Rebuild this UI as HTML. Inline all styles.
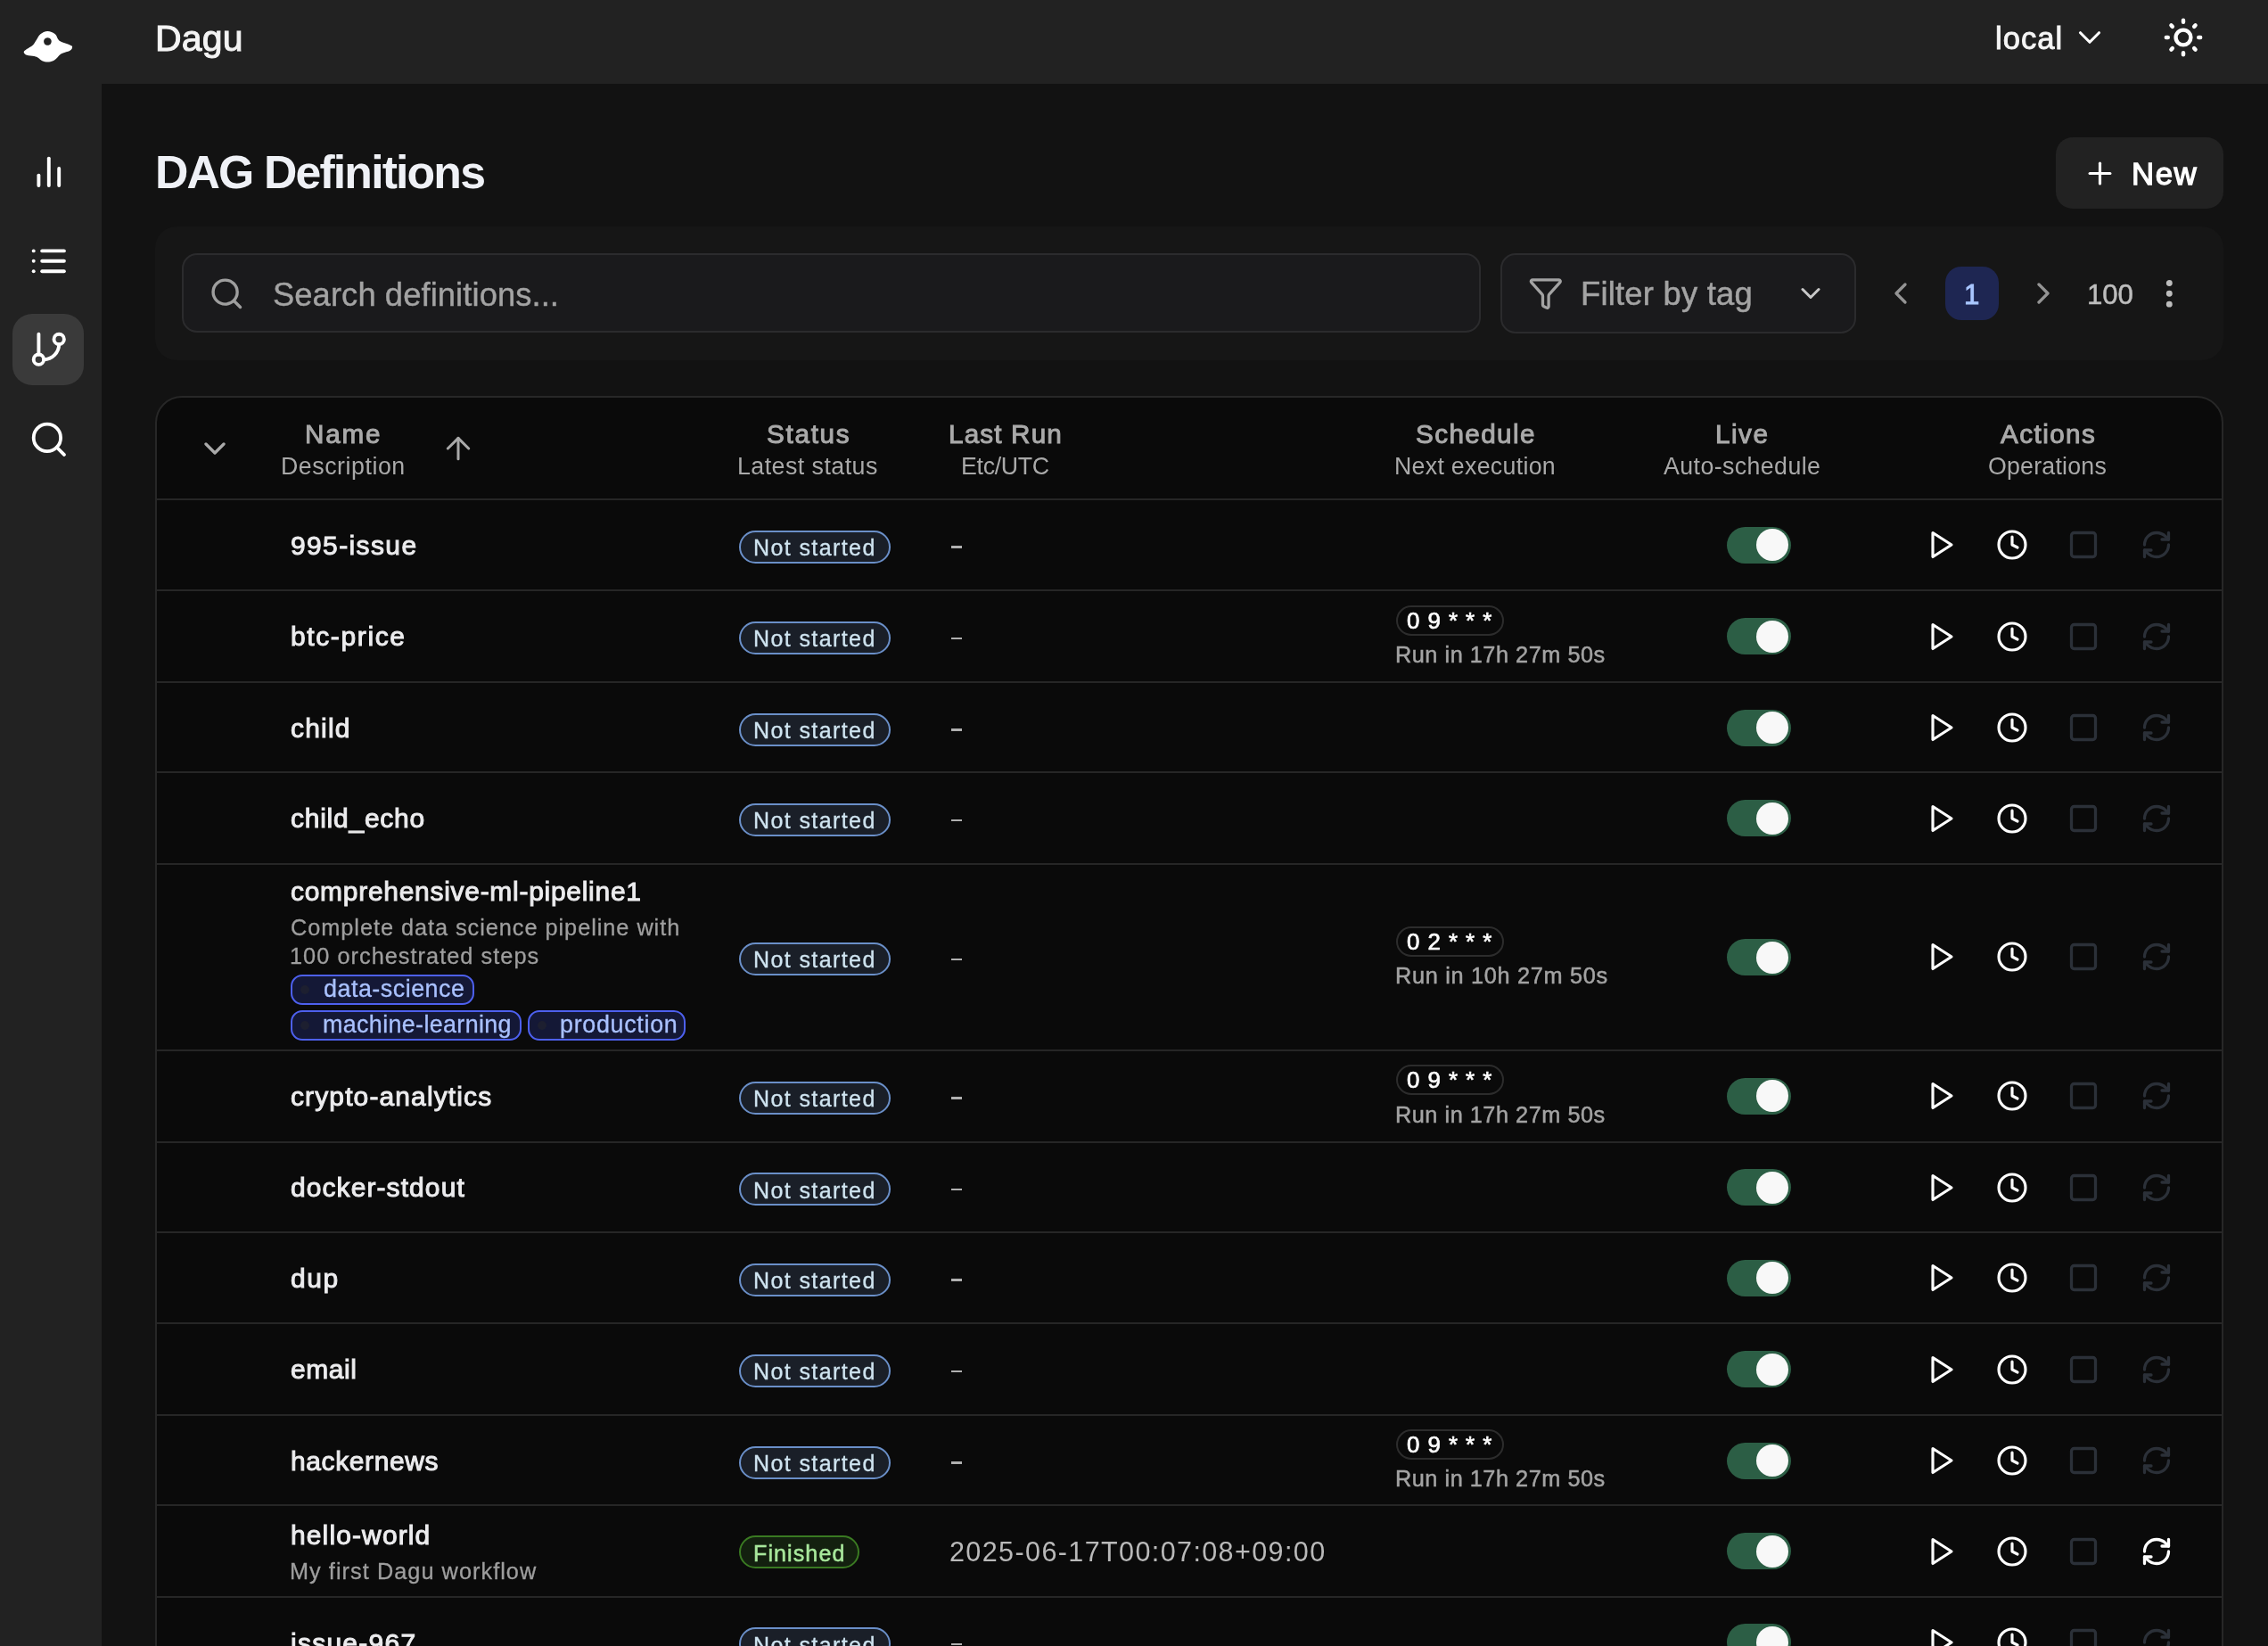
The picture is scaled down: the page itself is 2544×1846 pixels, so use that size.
<!DOCTYPE html>
<html><head><meta charset="utf-8"><style>
html,body{margin:0;padding:0;}
body{width:2544px;height:1846px;overflow:hidden;position:relative;background:#121212;font-family:"Liberation Sans",sans-serif;}
.b,.t,.i{position:absolute;}
.t{white-space:nowrap;will-change:transform;}
</style></head><body>
<div class="b" style="left:0;top:0;width:2544px;height:94px;background:#222222"></div>
<div class="b" style="left:0;top:0;width:114px;height:1846px;background:#222222"></div>
<svg class="i" style="left:20px;top:25px;width:70px;height:55px" viewBox="0 0 70 55"><path fill="#fff" fill-rule="evenodd" d="M33.4,10.0 C36.2,10.0 39.9,11.7 41.8,13.2 C43.7,14.7 44.0,17.4 45.0,18.8 C46.0,20.2 45.8,20.5 48.0,21.6 C50.2,22.7 56.3,24.4 58.5,25.4 C60.7,26.4 61.1,26.6 61.1,27.7 C61.1,28.8 60.6,30.4 58.5,31.7 C56.4,33.0 50.9,34.0 48.4,35.4 C45.9,36.8 45.1,38.9 43.6,40.2 C42.1,41.5 41.2,42.5 39.5,43.2 C37.8,43.9 35.4,44.5 33.4,44.5 C31.4,44.5 29.0,44.0 27.3,43.2 C25.6,42.5 24.5,40.9 23.0,40.0 C21.5,39.1 20.6,38.6 18.4,38.1 C16.2,37.6 11.9,37.6 10.0,36.8 C8.1,36.0 6.7,34.5 6.7,33.4 C6.7,32.3 8.3,31.4 10.0,30.1 C11.7,28.8 14.9,27.4 16.7,25.7 C18.5,24.0 19.3,22.1 20.7,20.0 C22.1,17.9 23.0,15.1 25.1,13.4 C27.2,11.7 30.6,10.0 33.4,10.0Z M33.4,17.2 a4.3,4.3 0 1,0 0.001,0Z"/></svg>
<div class="b" style="left:14px;top:352px;width:80px;height:80px;border-radius:22px;background:#3a3a3a"></div>
<svg class="i" style="left:31.60px;top:169.70px;width:45.60px;height:45.60px;" viewBox="0 0 24 24" fill="none" stroke="#fff" stroke-width="2.050" stroke-linecap="round" stroke-linejoin="round"><path d="M18 20V10"/><path d="M12 20V4"/><path d="M6 20v-6"/></svg>
<svg class="i" style="left:32.00px;top:269.80px;width:45.60px;height:45.60px;" viewBox="0 0 24 24" fill="none" stroke="#fff" stroke-width="2.050" stroke-linecap="round" stroke-linejoin="round"><path d="M3 12h.01"/><path d="M3 18h.01"/><path d="M3 6h.01"/><path d="M8 12h13"/><path d="M8 18h13"/><path d="M8 6h13"/></svg>
<svg class="i" style="left:31.80px;top:369.40px;width:45.60px;height:45.60px;" viewBox="0 0 24 24" fill="none" stroke="#fff" stroke-width="2.050" stroke-linecap="round" stroke-linejoin="round"><path d="M6 3v12"/><circle cx="18" cy="6" r="3"/><circle cx="6" cy="18" r="3"/><path d="M18 9a9 9 0 0 1-9 9"/></svg>
<svg class="i" style="left:31.60px;top:469.80px;width:45.60px;height:45.60px;" viewBox="0 0 24 24" fill="none" stroke="#fff" stroke-width="2.000" stroke-linecap="round" stroke-linejoin="round"><circle cx="11" cy="11" r="8"/><path d="m21 21-4.3-4.3"/></svg>
<svg class="i" style="left:2322.80px;top:20.80px;width:42.00px;height:42.00px;" viewBox="0 0 24 24" fill="none" stroke="#fff" stroke-width="1.800" stroke-linecap="round" stroke-linejoin="round"><path d="m6 9 6 6 6-6"/></svg>
<svg class="i" style="left:2425.00px;top:18.00px;width:48.00px;height:48.00px;" viewBox="0 0 24 24" fill="none" stroke="#fff" stroke-width="2.200" stroke-linecap="round" stroke-linejoin="round"><circle cx="12" cy="12" r="4.2"/><path d="M12.00 3.40L12.00 2.40"/><path d="M18.08 5.92L18.79 5.21"/><path d="M20.60 12.00L21.60 12.00"/><path d="M18.08 18.08L18.79 18.79"/><path d="M12.00 20.60L12.00 21.60"/><path d="M5.92 18.08L5.21 18.79"/><path d="M3.40 12.00L2.40 12.00"/><path d="M5.92 5.92L5.21 5.21"/></svg>
<div class="b" style="left:2306px;top:154px;width:188px;height:80px;border-radius:19px;background:#222222"></div>
<svg class="i" style="left:2336.00px;top:174.50px;width:39.00px;height:39.00px;" viewBox="0 0 24 24" fill="none" stroke="#fff" stroke-width="1.950" stroke-linecap="round" stroke-linejoin="round"><path d="M5 12h14"/><path d="M12 5v14"/></svg>
<div class="b" style="left:174px;top:254px;width:2320px;height:150px;border-radius:24px;background:#161616"></div>
<div class="b" style="left:204px;top:284px;width:1457px;height:89px;box-sizing:border-box;border:2px solid #2b2b2d;border-radius:17px;background:#1a1a1c"></div>
<svg class="i" style="left:233.90px;top:308.80px;width:40.60px;height:40.60px;" viewBox="0 0 24 24" fill="none" stroke="#9e9e9e" stroke-width="2.000" stroke-linecap="round" stroke-linejoin="round"><circle cx="11" cy="11" r="8"/><path d="m21 21-4.3-4.3"/></svg>
<div class="b" style="left:1683px;top:284px;width:399px;height:90px;box-sizing:border-box;border:2px solid #2b2b2d;border-radius:17px;background:#1a1a1c"></div>
<svg class="i" style="left:1714.00px;top:308.60px;width:39.60px;height:39.60px;" viewBox="0 0 24 24" fill="none" stroke="#a3a3a3" stroke-width="2.000" stroke-linecap="round" stroke-linejoin="round"><path d="M10 20a1 1 0 0 0 .553.895l2 1A1 1 0 0 0 14 21v-7a2 2 0 0 1 .517-1.341L21.74 4.67A1 1 0 0 0 21 3H3a1 1 0 0 0-.742 1.67l7.225 7.989A2 2 0 0 1 10 14z"/></svg>
<svg class="i" style="left:2012.50px;top:311.00px;width:36.00px;height:36.00px;" viewBox="0 0 24 24" fill="none" stroke="#c8c8c8" stroke-width="2.000" stroke-linecap="round" stroke-linejoin="round"><path d="m6 9 6 6 6-6"/></svg>
<svg class="i" style="left:2112.00px;top:308.50px;width:40.00px;height:40.00px;" viewBox="0 0 24 24" fill="none" stroke="#949494" stroke-width="2.000" stroke-linecap="round" stroke-linejoin="round"><path d="m15 18-6-6 6-6"/></svg>
<div class="b" style="left:2182px;top:299px;width:60px;height:60px;border-radius:18px;background:#1e2652"></div>
<svg class="i" style="left:2271.50px;top:308.50px;width:40.00px;height:40.00px;" viewBox="0 0 24 24" fill="none" stroke="#949494" stroke-width="2.000" stroke-linecap="round" stroke-linejoin="round"><path d="m9 18 6-6-6-6"/></svg>
<svg class="i" style="left:2413.40px;top:309.00px;width:40.60px;height:40.60px;" viewBox="0 0 24 24" fill="none" stroke="#bdbdbd" stroke-width="2.100" stroke-linecap="round" stroke-linejoin="round"><circle cx="12" cy="12" r="1"/><circle cx="12" cy="5" r="1"/><circle cx="12" cy="19" r="1"/></svg>
<div class="b" style="left:174px;top:444px;width:2320px;height:1442px;box-sizing:border-box;border:2px solid #272727;border-radius:30px;background:#0a0a0a"></div>
<svg class="i" style="left:220.80px;top:482.80px;width:40.00px;height:40.00px;" viewBox="0 0 24 24" fill="none" stroke="#a9a9a9" stroke-width="2.000" stroke-linecap="round" stroke-linejoin="round"><path d="m6 9 6 6 6-6"/></svg>
<svg class="i" style="left:494.00px;top:482.50px;width:40.00px;height:40.00px;" viewBox="0 0 24 24" fill="none" stroke="#a9a9a9" stroke-width="1.800" stroke-linecap="round" stroke-linejoin="round"><path d="m5 12 7-7 7 7"/><path d="M12 19V5"/></svg>
<div class="b" style="left:176px;top:559.0px;width:2316px;height:2px;background:#262626"></div>
<div class="b" style="left:829px;top:594.7px;width:170px;height:37px;box-sizing:border-box;border:2px solid #6a8fc8;border-radius:20px;background:#1a1f28"></div>
<div class="b" style="left:1067px;top:612.2px;width:12px;height:2.5px;background:#b0b0b0"></div>
<div class="b" style="left:1937px;top:590.7px;width:72px;height:41px;border-radius:21px;background:#2c5e45"></div>
<div class="b" style="left:1970px;top:593.2px;width:36px;height:36px;border-radius:18px;background:#f8f8f8"></div>
<svg class="i" style="left:2158.50px;top:593.20px;width:36.00px;height:36.00px;" viewBox="0 0 24 24" fill="none" stroke="#ffffff" stroke-width="2.100" stroke-linecap="round" stroke-linejoin="round"><polygon points="6 3 20 12 6 21 6 3"/></svg>
<svg class="i" style="left:2238.50px;top:593.20px;width:36.00px;height:36.00px;" viewBox="0 0 24 24" fill="none" stroke="#ffffff" stroke-width="2.100" stroke-linecap="round" stroke-linejoin="round"><circle cx="12" cy="12" r="10"/><polyline points="12 6 12 12 16 14"/></svg>
<svg class="i" style="left:2319.30px;top:593.20px;width:36.00px;height:36.00px;" viewBox="0 0 24 24" fill="none" stroke="#2b3038" stroke-width="2.200" stroke-linecap="round" stroke-linejoin="round"><rect width="18" height="18" x="3" y="3" rx="2"/></svg>
<svg class="i" style="left:2400.50px;top:593.20px;width:36.00px;height:36.00px;" viewBox="0 0 24 24" fill="none" stroke="#2b3038" stroke-width="2.200" stroke-linecap="round" stroke-linejoin="round"><path d="M3 12a9 9 0 0 1 9-9 9.75 9.75 0 0 1 6.74 2.74L21 8"/><path d="M21 3v5h-5"/><path d="M21 12a9 9 0 0 1-9 9 9.75 9.75 0 0 1-6.74-2.74L3 16"/><path d="M8 16H3v5"/></svg>
<div class="b" style="left:176px;top:661.4px;width:2316px;height:2px;background:#262626"></div>
<div class="b" style="left:829px;top:697.1px;width:170px;height:37px;box-sizing:border-box;border:2px solid #6a8fc8;border-radius:20px;background:#1a1f28"></div>
<div class="b" style="left:1067px;top:714.6px;width:12px;height:2.5px;background:#b0b0b0"></div>
<div class="b" style="left:1565.5px;top:678.6px;width:121px;height:34px;box-sizing:border-box;border:2px solid #2c2c2c;border-radius:18px"></div>
<div class="b" style="left:1937px;top:693.1px;width:72px;height:41px;border-radius:21px;background:#2c5e45"></div>
<div class="b" style="left:1970px;top:695.6px;width:36px;height:36px;border-radius:18px;background:#f8f8f8"></div>
<svg class="i" style="left:2158.50px;top:695.60px;width:36.00px;height:36.00px;" viewBox="0 0 24 24" fill="none" stroke="#ffffff" stroke-width="2.100" stroke-linecap="round" stroke-linejoin="round"><polygon points="6 3 20 12 6 21 6 3"/></svg>
<svg class="i" style="left:2238.50px;top:695.60px;width:36.00px;height:36.00px;" viewBox="0 0 24 24" fill="none" stroke="#ffffff" stroke-width="2.100" stroke-linecap="round" stroke-linejoin="round"><circle cx="12" cy="12" r="10"/><polyline points="12 6 12 12 16 14"/></svg>
<svg class="i" style="left:2319.30px;top:695.60px;width:36.00px;height:36.00px;" viewBox="0 0 24 24" fill="none" stroke="#2b3038" stroke-width="2.200" stroke-linecap="round" stroke-linejoin="round"><rect width="18" height="18" x="3" y="3" rx="2"/></svg>
<svg class="i" style="left:2400.50px;top:695.60px;width:36.00px;height:36.00px;" viewBox="0 0 24 24" fill="none" stroke="#2b3038" stroke-width="2.200" stroke-linecap="round" stroke-linejoin="round"><path d="M3 12a9 9 0 0 1 9-9 9.75 9.75 0 0 1 6.74 2.74L21 8"/><path d="M21 3v5h-5"/><path d="M21 12a9 9 0 0 1-9 9 9.75 9.75 0 0 1-6.74-2.74L3 16"/><path d="M8 16H3v5"/></svg>
<div class="b" style="left:176px;top:763.8px;width:2316px;height:2px;background:#262626"></div>
<div class="b" style="left:829px;top:799.5px;width:170px;height:37px;box-sizing:border-box;border:2px solid #6a8fc8;border-radius:20px;background:#1a1f28"></div>
<div class="b" style="left:1067px;top:817.0px;width:12px;height:2.5px;background:#b0b0b0"></div>
<div class="b" style="left:1937px;top:795.5px;width:72px;height:41px;border-radius:21px;background:#2c5e45"></div>
<div class="b" style="left:1970px;top:798.0px;width:36px;height:36px;border-radius:18px;background:#f8f8f8"></div>
<svg class="i" style="left:2158.50px;top:798.00px;width:36.00px;height:36.00px;" viewBox="0 0 24 24" fill="none" stroke="#ffffff" stroke-width="2.100" stroke-linecap="round" stroke-linejoin="round"><polygon points="6 3 20 12 6 21 6 3"/></svg>
<svg class="i" style="left:2238.50px;top:798.00px;width:36.00px;height:36.00px;" viewBox="0 0 24 24" fill="none" stroke="#ffffff" stroke-width="2.100" stroke-linecap="round" stroke-linejoin="round"><circle cx="12" cy="12" r="10"/><polyline points="12 6 12 12 16 14"/></svg>
<svg class="i" style="left:2319.30px;top:798.00px;width:36.00px;height:36.00px;" viewBox="0 0 24 24" fill="none" stroke="#2b3038" stroke-width="2.200" stroke-linecap="round" stroke-linejoin="round"><rect width="18" height="18" x="3" y="3" rx="2"/></svg>
<svg class="i" style="left:2400.50px;top:798.00px;width:36.00px;height:36.00px;" viewBox="0 0 24 24" fill="none" stroke="#2b3038" stroke-width="2.200" stroke-linecap="round" stroke-linejoin="round"><path d="M3 12a9 9 0 0 1 9-9 9.75 9.75 0 0 1 6.74 2.74L21 8"/><path d="M21 3v5h-5"/><path d="M21 12a9 9 0 0 1-9 9 9.75 9.75 0 0 1-6.74-2.74L3 16"/><path d="M8 16H3v5"/></svg>
<div class="b" style="left:176px;top:865.3px;width:2316px;height:2px;background:#262626"></div>
<div class="b" style="left:829px;top:901.0px;width:170px;height:37px;box-sizing:border-box;border:2px solid #6a8fc8;border-radius:20px;background:#1a1f28"></div>
<div class="b" style="left:1067px;top:918.5px;width:12px;height:2.5px;background:#b0b0b0"></div>
<div class="b" style="left:1937px;top:897.0px;width:72px;height:41px;border-radius:21px;background:#2c5e45"></div>
<div class="b" style="left:1970px;top:899.5px;width:36px;height:36px;border-radius:18px;background:#f8f8f8"></div>
<svg class="i" style="left:2158.50px;top:899.50px;width:36.00px;height:36.00px;" viewBox="0 0 24 24" fill="none" stroke="#ffffff" stroke-width="2.100" stroke-linecap="round" stroke-linejoin="round"><polygon points="6 3 20 12 6 21 6 3"/></svg>
<svg class="i" style="left:2238.50px;top:899.50px;width:36.00px;height:36.00px;" viewBox="0 0 24 24" fill="none" stroke="#ffffff" stroke-width="2.100" stroke-linecap="round" stroke-linejoin="round"><circle cx="12" cy="12" r="10"/><polyline points="12 6 12 12 16 14"/></svg>
<svg class="i" style="left:2319.30px;top:899.50px;width:36.00px;height:36.00px;" viewBox="0 0 24 24" fill="none" stroke="#2b3038" stroke-width="2.200" stroke-linecap="round" stroke-linejoin="round"><rect width="18" height="18" x="3" y="3" rx="2"/></svg>
<svg class="i" style="left:2400.50px;top:899.50px;width:36.00px;height:36.00px;" viewBox="0 0 24 24" fill="none" stroke="#2b3038" stroke-width="2.200" stroke-linecap="round" stroke-linejoin="round"><path d="M3 12a9 9 0 0 1 9-9 9.75 9.75 0 0 1 6.74 2.74L21 8"/><path d="M21 3v5h-5"/><path d="M21 12a9 9 0 0 1-9 9 9.75 9.75 0 0 1-6.74-2.74L3 16"/><path d="M8 16H3v5"/></svg>
<div class="b" style="left:176px;top:967.7px;width:2316px;height:2px;background:#262626"></div>
<div class="b" style="left:829px;top:1057.0px;width:170px;height:37px;box-sizing:border-box;border:2px solid #6a8fc8;border-radius:20px;background:#1a1f28"></div>
<div class="b" style="left:1067px;top:1074.5px;width:12px;height:2.5px;background:#b0b0b0"></div>
<div class="b" style="left:1565.5px;top:1038.5px;width:121px;height:34px;box-sizing:border-box;border:2px solid #2c2c2c;border-radius:18px"></div>
<div class="b" style="left:1937px;top:1053.0px;width:72px;height:41px;border-radius:21px;background:#2c5e45"></div>
<div class="b" style="left:1970px;top:1055.5px;width:36px;height:36px;border-radius:18px;background:#f8f8f8"></div>
<svg class="i" style="left:2158.50px;top:1055.45px;width:36.00px;height:36.00px;" viewBox="0 0 24 24" fill="none" stroke="#ffffff" stroke-width="2.100" stroke-linecap="round" stroke-linejoin="round"><polygon points="6 3 20 12 6 21 6 3"/></svg>
<svg class="i" style="left:2238.50px;top:1055.45px;width:36.00px;height:36.00px;" viewBox="0 0 24 24" fill="none" stroke="#ffffff" stroke-width="2.100" stroke-linecap="round" stroke-linejoin="round"><circle cx="12" cy="12" r="10"/><polyline points="12 6 12 12 16 14"/></svg>
<svg class="i" style="left:2319.30px;top:1055.45px;width:36.00px;height:36.00px;" viewBox="0 0 24 24" fill="none" stroke="#2b3038" stroke-width="2.200" stroke-linecap="round" stroke-linejoin="round"><rect width="18" height="18" x="3" y="3" rx="2"/></svg>
<svg class="i" style="left:2400.50px;top:1055.45px;width:36.00px;height:36.00px;" viewBox="0 0 24 24" fill="none" stroke="#2b3038" stroke-width="2.200" stroke-linecap="round" stroke-linejoin="round"><path d="M3 12a9 9 0 0 1 9-9 9.75 9.75 0 0 1 6.74 2.74L21 8"/><path d="M21 3v5h-5"/><path d="M21 12a9 9 0 0 1-9 9 9.75 9.75 0 0 1-6.74-2.74L3 16"/><path d="M8 16H3v5"/></svg>
<div class="b" style="left:176px;top:1177.2px;width:2316px;height:2px;background:#262626"></div>
<div class="b" style="left:829px;top:1212.9px;width:170px;height:37px;box-sizing:border-box;border:2px solid #6a8fc8;border-radius:20px;background:#1a1f28"></div>
<div class="b" style="left:1067px;top:1230.4px;width:12px;height:2.5px;background:#b0b0b0"></div>
<div class="b" style="left:1565.5px;top:1194.4px;width:121px;height:34px;box-sizing:border-box;border:2px solid #2c2c2c;border-radius:18px"></div>
<div class="b" style="left:1937px;top:1208.9px;width:72px;height:41px;border-radius:21px;background:#2c5e45"></div>
<div class="b" style="left:1970px;top:1211.4px;width:36px;height:36px;border-radius:18px;background:#f8f8f8"></div>
<svg class="i" style="left:2158.50px;top:1211.40px;width:36.00px;height:36.00px;" viewBox="0 0 24 24" fill="none" stroke="#ffffff" stroke-width="2.100" stroke-linecap="round" stroke-linejoin="round"><polygon points="6 3 20 12 6 21 6 3"/></svg>
<svg class="i" style="left:2238.50px;top:1211.40px;width:36.00px;height:36.00px;" viewBox="0 0 24 24" fill="none" stroke="#ffffff" stroke-width="2.100" stroke-linecap="round" stroke-linejoin="round"><circle cx="12" cy="12" r="10"/><polyline points="12 6 12 12 16 14"/></svg>
<svg class="i" style="left:2319.30px;top:1211.40px;width:36.00px;height:36.00px;" viewBox="0 0 24 24" fill="none" stroke="#2b3038" stroke-width="2.200" stroke-linecap="round" stroke-linejoin="round"><rect width="18" height="18" x="3" y="3" rx="2"/></svg>
<svg class="i" style="left:2400.50px;top:1211.40px;width:36.00px;height:36.00px;" viewBox="0 0 24 24" fill="none" stroke="#2b3038" stroke-width="2.200" stroke-linecap="round" stroke-linejoin="round"><path d="M3 12a9 9 0 0 1 9-9 9.75 9.75 0 0 1 6.74 2.74L21 8"/><path d="M21 3v5h-5"/><path d="M21 12a9 9 0 0 1-9 9 9.75 9.75 0 0 1-6.74-2.74L3 16"/><path d="M8 16H3v5"/></svg>
<div class="b" style="left:176px;top:1279.5px;width:2316px;height:2px;background:#262626"></div>
<div class="b" style="left:829px;top:1315.2px;width:170px;height:37px;box-sizing:border-box;border:2px solid #6a8fc8;border-radius:20px;background:#1a1f28"></div>
<div class="b" style="left:1067px;top:1332.7px;width:12px;height:2.5px;background:#b0b0b0"></div>
<div class="b" style="left:1937px;top:1311.2px;width:72px;height:41px;border-radius:21px;background:#2c5e45"></div>
<div class="b" style="left:1970px;top:1313.7px;width:36px;height:36px;border-radius:18px;background:#f8f8f8"></div>
<svg class="i" style="left:2158.50px;top:1313.70px;width:36.00px;height:36.00px;" viewBox="0 0 24 24" fill="none" stroke="#ffffff" stroke-width="2.100" stroke-linecap="round" stroke-linejoin="round"><polygon points="6 3 20 12 6 21 6 3"/></svg>
<svg class="i" style="left:2238.50px;top:1313.70px;width:36.00px;height:36.00px;" viewBox="0 0 24 24" fill="none" stroke="#ffffff" stroke-width="2.100" stroke-linecap="round" stroke-linejoin="round"><circle cx="12" cy="12" r="10"/><polyline points="12 6 12 12 16 14"/></svg>
<svg class="i" style="left:2319.30px;top:1313.70px;width:36.00px;height:36.00px;" viewBox="0 0 24 24" fill="none" stroke="#2b3038" stroke-width="2.200" stroke-linecap="round" stroke-linejoin="round"><rect width="18" height="18" x="3" y="3" rx="2"/></svg>
<svg class="i" style="left:2400.50px;top:1313.70px;width:36.00px;height:36.00px;" viewBox="0 0 24 24" fill="none" stroke="#2b3038" stroke-width="2.200" stroke-linecap="round" stroke-linejoin="round"><path d="M3 12a9 9 0 0 1 9-9 9.75 9.75 0 0 1 6.74 2.74L21 8"/><path d="M21 3v5h-5"/><path d="M21 12a9 9 0 0 1-9 9 9.75 9.75 0 0 1-6.74-2.74L3 16"/><path d="M8 16H3v5"/></svg>
<div class="b" style="left:176px;top:1381.0px;width:2316px;height:2px;background:#262626"></div>
<div class="b" style="left:829px;top:1416.7px;width:170px;height:37px;box-sizing:border-box;border:2px solid #6a8fc8;border-radius:20px;background:#1a1f28"></div>
<div class="b" style="left:1067px;top:1434.2px;width:12px;height:2.5px;background:#b0b0b0"></div>
<div class="b" style="left:1937px;top:1412.7px;width:72px;height:41px;border-radius:21px;background:#2c5e45"></div>
<div class="b" style="left:1970px;top:1415.2px;width:36px;height:36px;border-radius:18px;background:#f8f8f8"></div>
<svg class="i" style="left:2158.50px;top:1415.20px;width:36.00px;height:36.00px;" viewBox="0 0 24 24" fill="none" stroke="#ffffff" stroke-width="2.100" stroke-linecap="round" stroke-linejoin="round"><polygon points="6 3 20 12 6 21 6 3"/></svg>
<svg class="i" style="left:2238.50px;top:1415.20px;width:36.00px;height:36.00px;" viewBox="0 0 24 24" fill="none" stroke="#ffffff" stroke-width="2.100" stroke-linecap="round" stroke-linejoin="round"><circle cx="12" cy="12" r="10"/><polyline points="12 6 12 12 16 14"/></svg>
<svg class="i" style="left:2319.30px;top:1415.20px;width:36.00px;height:36.00px;" viewBox="0 0 24 24" fill="none" stroke="#2b3038" stroke-width="2.200" stroke-linecap="round" stroke-linejoin="round"><rect width="18" height="18" x="3" y="3" rx="2"/></svg>
<svg class="i" style="left:2400.50px;top:1415.20px;width:36.00px;height:36.00px;" viewBox="0 0 24 24" fill="none" stroke="#2b3038" stroke-width="2.200" stroke-linecap="round" stroke-linejoin="round"><path d="M3 12a9 9 0 0 1 9-9 9.75 9.75 0 0 1 6.74 2.74L21 8"/><path d="M21 3v5h-5"/><path d="M21 12a9 9 0 0 1-9 9 9.75 9.75 0 0 1-6.74-2.74L3 16"/><path d="M8 16H3v5"/></svg>
<div class="b" style="left:176px;top:1483.4px;width:2316px;height:2px;background:#262626"></div>
<div class="b" style="left:829px;top:1519.1px;width:170px;height:37px;box-sizing:border-box;border:2px solid #6a8fc8;border-radius:20px;background:#1a1f28"></div>
<div class="b" style="left:1067px;top:1536.6px;width:12px;height:2.5px;background:#b0b0b0"></div>
<div class="b" style="left:1937px;top:1515.1px;width:72px;height:41px;border-radius:21px;background:#2c5e45"></div>
<div class="b" style="left:1970px;top:1517.6px;width:36px;height:36px;border-radius:18px;background:#f8f8f8"></div>
<svg class="i" style="left:2158.50px;top:1517.60px;width:36.00px;height:36.00px;" viewBox="0 0 24 24" fill="none" stroke="#ffffff" stroke-width="2.100" stroke-linecap="round" stroke-linejoin="round"><polygon points="6 3 20 12 6 21 6 3"/></svg>
<svg class="i" style="left:2238.50px;top:1517.60px;width:36.00px;height:36.00px;" viewBox="0 0 24 24" fill="none" stroke="#ffffff" stroke-width="2.100" stroke-linecap="round" stroke-linejoin="round"><circle cx="12" cy="12" r="10"/><polyline points="12 6 12 12 16 14"/></svg>
<svg class="i" style="left:2319.30px;top:1517.60px;width:36.00px;height:36.00px;" viewBox="0 0 24 24" fill="none" stroke="#2b3038" stroke-width="2.200" stroke-linecap="round" stroke-linejoin="round"><rect width="18" height="18" x="3" y="3" rx="2"/></svg>
<svg class="i" style="left:2400.50px;top:1517.60px;width:36.00px;height:36.00px;" viewBox="0 0 24 24" fill="none" stroke="#2b3038" stroke-width="2.200" stroke-linecap="round" stroke-linejoin="round"><path d="M3 12a9 9 0 0 1 9-9 9.75 9.75 0 0 1 6.74 2.74L21 8"/><path d="M21 3v5h-5"/><path d="M21 12a9 9 0 0 1-9 9 9.75 9.75 0 0 1-6.74-2.74L3 16"/><path d="M8 16H3v5"/></svg>
<div class="b" style="left:176px;top:1585.8px;width:2316px;height:2px;background:#262626"></div>
<div class="b" style="left:829px;top:1621.5px;width:170px;height:37px;box-sizing:border-box;border:2px solid #6a8fc8;border-radius:20px;background:#1a1f28"></div>
<div class="b" style="left:1067px;top:1639.0px;width:12px;height:2.5px;background:#b0b0b0"></div>
<div class="b" style="left:1565.5px;top:1603.0px;width:121px;height:34px;box-sizing:border-box;border:2px solid #2c2c2c;border-radius:18px"></div>
<div class="b" style="left:1937px;top:1617.5px;width:72px;height:41px;border-radius:21px;background:#2c5e45"></div>
<div class="b" style="left:1970px;top:1620.0px;width:36px;height:36px;border-radius:18px;background:#f8f8f8"></div>
<svg class="i" style="left:2158.50px;top:1620.00px;width:36.00px;height:36.00px;" viewBox="0 0 24 24" fill="none" stroke="#ffffff" stroke-width="2.100" stroke-linecap="round" stroke-linejoin="round"><polygon points="6 3 20 12 6 21 6 3"/></svg>
<svg class="i" style="left:2238.50px;top:1620.00px;width:36.00px;height:36.00px;" viewBox="0 0 24 24" fill="none" stroke="#ffffff" stroke-width="2.100" stroke-linecap="round" stroke-linejoin="round"><circle cx="12" cy="12" r="10"/><polyline points="12 6 12 12 16 14"/></svg>
<svg class="i" style="left:2319.30px;top:1620.00px;width:36.00px;height:36.00px;" viewBox="0 0 24 24" fill="none" stroke="#2b3038" stroke-width="2.200" stroke-linecap="round" stroke-linejoin="round"><rect width="18" height="18" x="3" y="3" rx="2"/></svg>
<svg class="i" style="left:2400.50px;top:1620.00px;width:36.00px;height:36.00px;" viewBox="0 0 24 24" fill="none" stroke="#2b3038" stroke-width="2.200" stroke-linecap="round" stroke-linejoin="round"><path d="M3 12a9 9 0 0 1 9-9 9.75 9.75 0 0 1 6.74 2.74L21 8"/><path d="M21 3v5h-5"/><path d="M21 12a9 9 0 0 1-9 9 9.75 9.75 0 0 1-6.74-2.74L3 16"/><path d="M8 16H3v5"/></svg>
<div class="b" style="left:176px;top:1687.3px;width:2316px;height:2px;background:#262626"></div>
<div class="b" style="left:829px;top:1722.2px;width:135px;height:37px;box-sizing:border-box;border:2px solid #3a7a22;border-radius:20px;background:#13200f"></div>
<div class="b" style="left:1937px;top:1719.0px;width:72px;height:41px;border-radius:21px;background:#2c5e45"></div>
<div class="b" style="left:1970px;top:1721.5px;width:36px;height:36px;border-radius:18px;background:#f8f8f8"></div>
<svg class="i" style="left:2158.50px;top:1721.50px;width:36.00px;height:36.00px;" viewBox="0 0 24 24" fill="none" stroke="#ffffff" stroke-width="2.100" stroke-linecap="round" stroke-linejoin="round"><polygon points="6 3 20 12 6 21 6 3"/></svg>
<svg class="i" style="left:2238.50px;top:1721.50px;width:36.00px;height:36.00px;" viewBox="0 0 24 24" fill="none" stroke="#ffffff" stroke-width="2.100" stroke-linecap="round" stroke-linejoin="round"><circle cx="12" cy="12" r="10"/><polyline points="12 6 12 12 16 14"/></svg>
<svg class="i" style="left:2319.30px;top:1721.50px;width:36.00px;height:36.00px;" viewBox="0 0 24 24" fill="none" stroke="#2b3038" stroke-width="2.200" stroke-linecap="round" stroke-linejoin="round"><rect width="18" height="18" x="3" y="3" rx="2"/></svg>
<svg class="i" style="left:2400.50px;top:1721.50px;width:36.00px;height:36.00px;" viewBox="0 0 24 24" fill="none" stroke="#ffffff" stroke-width="2.200" stroke-linecap="round" stroke-linejoin="round"><path d="M3 12a9 9 0 0 1 9-9 9.75 9.75 0 0 1 6.74 2.74L21 8"/><path d="M21 3v5h-5"/><path d="M21 12a9 9 0 0 1-9 9 9.75 9.75 0 0 1-6.74-2.74L3 16"/><path d="M8 16H3v5"/></svg>
<div class="b" style="left:176px;top:1789.7px;width:2316px;height:2px;background:#262626"></div>
<div class="b" style="left:829px;top:1825.4px;width:170px;height:37px;box-sizing:border-box;border:2px solid #6a8fc8;border-radius:20px;background:#1a1f28"></div>
<div class="b" style="left:1067px;top:1842.9px;width:12px;height:2.5px;background:#b0b0b0"></div>
<div class="b" style="left:1937px;top:1821.4px;width:72px;height:41px;border-radius:21px;background:#2c5e45"></div>
<div class="b" style="left:1970px;top:1823.9px;width:36px;height:36px;border-radius:18px;background:#f8f8f8"></div>
<svg class="i" style="left:2158.50px;top:1823.90px;width:36.00px;height:36.00px;" viewBox="0 0 24 24" fill="none" stroke="#ffffff" stroke-width="2.100" stroke-linecap="round" stroke-linejoin="round"><polygon points="6 3 20 12 6 21 6 3"/></svg>
<svg class="i" style="left:2238.50px;top:1823.90px;width:36.00px;height:36.00px;" viewBox="0 0 24 24" fill="none" stroke="#ffffff" stroke-width="2.100" stroke-linecap="round" stroke-linejoin="round"><circle cx="12" cy="12" r="10"/><polyline points="12 6 12 12 16 14"/></svg>
<svg class="i" style="left:2319.30px;top:1823.90px;width:36.00px;height:36.00px;" viewBox="0 0 24 24" fill="none" stroke="#2b3038" stroke-width="2.200" stroke-linecap="round" stroke-linejoin="round"><rect width="18" height="18" x="3" y="3" rx="2"/></svg>
<svg class="i" style="left:2400.50px;top:1823.90px;width:36.00px;height:36.00px;" viewBox="0 0 24 24" fill="none" stroke="#2b3038" stroke-width="2.200" stroke-linecap="round" stroke-linejoin="round"><path d="M3 12a9 9 0 0 1 9-9 9.75 9.75 0 0 1 6.74 2.74L21 8"/><path d="M21 3v5h-5"/><path d="M21 12a9 9 0 0 1-9 9 9.75 9.75 0 0 1-6.74-2.74L3 16"/><path d="M8 16H3v5"/></svg>
<div class="b" style="left:326.3px;top:1092.6px;width:205.7px;height:34px;box-sizing:border-box;border:2px solid #4d60ee;border-radius:13px;background:#141836"></div>
<div class="b" style="left:337.3px;top:1104.6px;width:10px;height:10px;border-radius:5px;background:#1d1f30"></div>
<div class="b" style="left:326.3px;top:1132.6px;width:258.5px;height:34px;box-sizing:border-box;border:2px solid #4d60ee;border-radius:13px;background:#141836"></div>
<div class="b" style="left:337.3px;top:1144.6px;width:10px;height:10px;border-radius:5px;background:#1d1f30"></div>
<div class="b" style="left:591.5px;top:1132.6px;width:177.8px;height:34px;box-sizing:border-box;border:2px solid #4d60ee;border-radius:13px;background:#141836"></div>
<div class="b" style="left:602.5px;top:1144.6px;width:10px;height:10px;border-radius:5px;background:#1d1f30"></div>
<div class="t" style="left:173.72px;top:22.50px;font-size:40.99px;line-height:40.99px;letter-spacing:0.168px;font-weight:400;color:#f4f4f4;-webkit-text-stroke:1.00px #f4f4f4;">Dagu</div>
<div class="t" style="left:2238.37px;top:25.60px;font-size:34.60px;line-height:34.60px;letter-spacing:1.042px;font-weight:400;color:#f5f5f5;-webkit-text-stroke:0.90px #f5f5f5;">local</div>
<div class="t" style="left:173.90px;top:167.99px;font-size:51.74px;line-height:51.74px;letter-spacing:-1.837px;font-weight:700;color:#eff1f6;">DAG Definitions</div>
<div class="t" style="left:2391.16px;top:178.26px;font-size:34.88px;line-height:34.88px;letter-spacing:1.517px;font-weight:400;color:#ffffff;-webkit-text-stroke:1.30px #ffffff;">New</div>
<div class="t" style="left:306.15px;top:312.83px;font-size:36.34px;line-height:36.34px;letter-spacing:0.095px;font-weight:400;color:#a3a3a3;-webkit-text-stroke:0.40px #a3a3a3;">Search definitions...</div>
<div class="t" style="left:1773.14px;top:312.03px;font-size:36.34px;line-height:36.34px;letter-spacing:0.235px;font-weight:400;color:#a3a3a3;-webkit-text-stroke:0.50px #a3a3a3;">Filter by tag</div>
<div class="t" style="left:2202.74px;top:314.54px;font-size:31.25px;line-height:31.25px;letter-spacing:0.000px;font-weight:400;color:#a9c6ff;-webkit-text-stroke:0.90px #a9c6ff;">1</div>
<div class="t" style="left:2341.06px;top:314.54px;font-size:31.25px;line-height:31.25px;letter-spacing:-0.161px;font-weight:400;color:#bdbdbd;-webkit-text-stroke:0.50px #bdbdbd;">100</div>
<div class="t" style="left:342.23px;top:471.69px;font-size:29.65px;line-height:29.65px;letter-spacing:1.783px;font-weight:400;color:#a9a9a9;-webkit-text-stroke:1.00px #a9a9a9;">Name</div>
<div class="t" style="left:315.16px;top:509.76px;font-size:26.74px;line-height:26.74px;letter-spacing:0.547px;font-weight:400;color:#a9a9a9;">Description</div>
<div class="t" style="left:860.31px;top:471.69px;font-size:29.65px;line-height:29.65px;letter-spacing:1.723px;font-weight:400;color:#a9a9a9;-webkit-text-stroke:1.00px #a9a9a9;">Status</div>
<div class="t" style="left:827.46px;top:509.76px;font-size:26.74px;line-height:26.74px;letter-spacing:0.475px;font-weight:400;color:#a9a9a9;">Latest status</div>
<div class="t" style="left:1064.13px;top:471.69px;font-size:29.65px;line-height:29.65px;letter-spacing:1.166px;font-weight:400;color:#a9a9a9;-webkit-text-stroke:1.00px #a9a9a9;">Last Run</div>
<div class="t" style="left:1077.66px;top:509.76px;font-size:26.74px;line-height:26.74px;letter-spacing:-0.306px;font-weight:400;color:#a9a9a9;">Etc/UTC</div>
<div class="t" style="left:1588.21px;top:471.69px;font-size:29.65px;line-height:29.65px;letter-spacing:1.402px;font-weight:400;color:#a9a9a9;-webkit-text-stroke:1.00px #a9a9a9;">Schedule</div>
<div class="t" style="left:1564.31px;top:509.76px;font-size:26.74px;line-height:26.74px;letter-spacing:0.295px;font-weight:400;color:#a9a9a9;">Next execution</div>
<div class="t" style="left:1923.58px;top:471.69px;font-size:29.65px;line-height:29.65px;letter-spacing:1.517px;font-weight:400;color:#a9a9a9;-webkit-text-stroke:1.00px #a9a9a9;">Live</div>
<div class="t" style="left:1866.20px;top:509.76px;font-size:26.74px;line-height:26.74px;letter-spacing:0.416px;font-weight:400;color:#a9a9a9;">Auto-schedule</div>
<div class="t" style="left:2244.30px;top:471.69px;font-size:29.65px;line-height:29.65px;letter-spacing:1.442px;font-weight:400;color:#a9a9a9;-webkit-text-stroke:1.00px #a9a9a9;">Actions</div>
<div class="t" style="left:2230.23px;top:509.76px;font-size:26.74px;line-height:26.74px;letter-spacing:0.228px;font-weight:400;color:#a9a9a9;">Operations</div>
<div class="t" style="left:326.30px;top:596.85px;font-size:29.94px;line-height:29.94px;letter-spacing:1.407px;font-weight:400;color:#ececee;-webkit-text-stroke:1.00px #ececee;">995-issue</div>
<div class="t" style="left:845.35px;top:602.03px;font-size:25.00px;line-height:25.00px;letter-spacing:1.403px;font-weight:400;color:#cfe4f0;-webkit-text-stroke:0.30px #cfe4f0;">Not started</div>
<div class="t" style="left:325.70px;top:699.25px;font-size:29.94px;line-height:29.94px;letter-spacing:1.646px;font-weight:400;color:#ececee;-webkit-text-stroke:1.00px #ececee;">btc-price</div>
<div class="t" style="left:845.35px;top:704.43px;font-size:25.00px;line-height:25.00px;letter-spacing:1.403px;font-weight:400;color:#cfe4f0;-webkit-text-stroke:0.30px #cfe4f0;">Not started</div>
<div class="t" style="left:1577.97px;top:683.69px;font-size:25.87px;line-height:25.87px;letter-spacing:0.947px;font-weight:400;color:#ffffff;-webkit-text-stroke:0.70px #ffffff;">0 9 * * *</div>
<div class="t" style="left:1564.73px;top:722.09px;font-size:25.29px;line-height:25.29px;letter-spacing:0.525px;font-weight:400;color:#a3a3a3;-webkit-text-stroke:0.50px #a3a3a3;">Run in 17h 27m 50s</div>
<div class="t" style="left:326.30px;top:801.65px;font-size:29.94px;line-height:29.94px;letter-spacing:1.225px;font-weight:400;color:#ececee;-webkit-text-stroke:1.00px #ececee;">child</div>
<div class="t" style="left:845.35px;top:806.83px;font-size:25.00px;line-height:25.00px;letter-spacing:1.403px;font-weight:400;color:#cfe4f0;-webkit-text-stroke:0.30px #cfe4f0;">Not started</div>
<div class="t" style="left:326.30px;top:903.15px;font-size:29.94px;line-height:29.94px;letter-spacing:0.780px;font-weight:400;color:#ececee;-webkit-text-stroke:1.00px #ececee;">child_echo</div>
<div class="t" style="left:845.35px;top:908.33px;font-size:25.00px;line-height:25.00px;letter-spacing:1.403px;font-weight:400;color:#cfe4f0;-webkit-text-stroke:0.30px #cfe4f0;">Not started</div>
<div class="t" style="left:326.30px;top:984.65px;font-size:29.94px;line-height:29.94px;letter-spacing:0.741px;font-weight:400;color:#ececee;-webkit-text-stroke:1.00px #ececee;">comprehensive-ml-pipeline1</div>
<div class="t" style="left:325.59px;top:1027.89px;font-size:25.29px;line-height:25.29px;letter-spacing:0.968px;font-weight:400;color:#9e9e9e;-webkit-text-stroke:0.30px #9e9e9e;">Complete data science pipeline with</div>
<div class="t" style="left:325.08px;top:1059.59px;font-size:25.29px;line-height:25.29px;letter-spacing:1.045px;font-weight:400;color:#9e9e9e;-webkit-text-stroke:0.30px #9e9e9e;">100 orchestrated steps</div>
<div class="t" style="left:845.35px;top:1064.28px;font-size:25.00px;line-height:25.00px;letter-spacing:1.403px;font-weight:400;color:#cfe4f0;-webkit-text-stroke:0.30px #cfe4f0;">Not started</div>
<div class="t" style="left:1577.97px;top:1043.54px;font-size:25.87px;line-height:25.87px;letter-spacing:0.947px;font-weight:400;color:#ffffff;-webkit-text-stroke:0.70px #ffffff;">0 2 * * *</div>
<div class="t" style="left:1564.73px;top:1081.94px;font-size:25.29px;line-height:25.29px;letter-spacing:0.701px;font-weight:400;color:#a3a3a3;-webkit-text-stroke:0.50px #a3a3a3;">Run in 10h 27m 50s</div>
<div class="t" style="left:326.30px;top:1215.05px;font-size:29.94px;line-height:29.94px;letter-spacing:1.146px;font-weight:400;color:#ececee;-webkit-text-stroke:1.00px #ececee;">crypto-analytics</div>
<div class="t" style="left:845.35px;top:1220.23px;font-size:25.00px;line-height:25.00px;letter-spacing:1.403px;font-weight:400;color:#cfe4f0;-webkit-text-stroke:0.30px #cfe4f0;">Not started</div>
<div class="t" style="left:1577.97px;top:1199.49px;font-size:25.87px;line-height:25.87px;letter-spacing:0.947px;font-weight:400;color:#ffffff;-webkit-text-stroke:0.70px #ffffff;">0 9 * * *</div>
<div class="t" style="left:1564.73px;top:1237.89px;font-size:25.29px;line-height:25.29px;letter-spacing:0.525px;font-weight:400;color:#a3a3a3;-webkit-text-stroke:0.50px #a3a3a3;">Run in 17h 27m 50s</div>
<div class="t" style="left:326.30px;top:1317.35px;font-size:29.94px;line-height:29.94px;letter-spacing:1.111px;font-weight:400;color:#ececee;-webkit-text-stroke:1.00px #ececee;">docker-stdout</div>
<div class="t" style="left:845.35px;top:1322.53px;font-size:25.00px;line-height:25.00px;letter-spacing:1.403px;font-weight:400;color:#cfe4f0;-webkit-text-stroke:0.30px #cfe4f0;">Not started</div>
<div class="t" style="left:326.30px;top:1418.85px;font-size:29.94px;line-height:29.94px;letter-spacing:1.662px;font-weight:400;color:#ececee;-webkit-text-stroke:1.00px #ececee;">dup</div>
<div class="t" style="left:845.35px;top:1424.03px;font-size:25.00px;line-height:25.00px;letter-spacing:1.403px;font-weight:400;color:#cfe4f0;-webkit-text-stroke:0.30px #cfe4f0;">Not started</div>
<div class="t" style="left:326.30px;top:1521.25px;font-size:29.94px;line-height:29.94px;letter-spacing:0.602px;font-weight:400;color:#ececee;-webkit-text-stroke:1.00px #ececee;">email</div>
<div class="t" style="left:845.35px;top:1526.43px;font-size:25.00px;line-height:25.00px;letter-spacing:1.403px;font-weight:400;color:#cfe4f0;-webkit-text-stroke:0.30px #cfe4f0;">Not started</div>
<div class="t" style="left:325.70px;top:1623.65px;font-size:29.94px;line-height:29.94px;letter-spacing:0.636px;font-weight:400;color:#ececee;-webkit-text-stroke:1.00px #ececee;">hackernews</div>
<div class="t" style="left:845.35px;top:1628.83px;font-size:25.00px;line-height:25.00px;letter-spacing:1.403px;font-weight:400;color:#cfe4f0;-webkit-text-stroke:0.30px #cfe4f0;">Not started</div>
<div class="t" style="left:1577.97px;top:1608.09px;font-size:25.87px;line-height:25.87px;letter-spacing:0.947px;font-weight:400;color:#ffffff;-webkit-text-stroke:0.70px #ffffff;">0 9 * * *</div>
<div class="t" style="left:1564.73px;top:1646.49px;font-size:25.29px;line-height:25.29px;letter-spacing:0.525px;font-weight:400;color:#a3a3a3;-webkit-text-stroke:0.50px #a3a3a3;">Run in 17h 27m 50s</div>
<div class="t" style="left:325.70px;top:1707.15px;font-size:29.94px;line-height:29.94px;letter-spacing:1.150px;font-weight:400;color:#ececee;-webkit-text-stroke:1.00px #ececee;">hello-world</div>
<div class="t" style="left:325.13px;top:1750.29px;font-size:25.29px;line-height:25.29px;letter-spacing:1.046px;font-weight:400;color:#9e9e9e;-webkit-text-stroke:0.30px #9e9e9e;">My first Dagu workflow</div>
<div class="t" style="left:844.55px;top:1730.33px;font-size:25.00px;line-height:25.00px;letter-spacing:1.116px;font-weight:400;color:#a8e89c;-webkit-text-stroke:0.50px #a8e89c;">Finished</div>
<div class="t" style="left:1065.37px;top:1724.96px;font-size:30.52px;line-height:30.52px;letter-spacing:1.393px;font-weight:400;color:#b9b9b9;">2025-06-17T00:07:08+09:00</div>
<div class="t" style="left:325.70px;top:1827.55px;font-size:29.94px;line-height:29.94px;letter-spacing:1.282px;font-weight:400;color:#ececee;-webkit-text-stroke:1.00px #ececee;">issue-967</div>
<div class="t" style="left:845.35px;top:1832.73px;font-size:25.00px;line-height:25.00px;letter-spacing:1.403px;font-weight:400;color:#cfe4f0;-webkit-text-stroke:0.30px #cfe4f0;">Not started</div>
<div class="t" style="left:362.87px;top:1096.33px;font-size:26.89px;line-height:26.89px;letter-spacing:0.508px;font-weight:400;color:#a9c1ff;-webkit-text-stroke:0.30px #a9c1ff;">data-science</div>
<div class="t" style="left:362.34px;top:1136.33px;font-size:26.89px;line-height:26.89px;letter-spacing:0.357px;font-weight:400;color:#a9c1ff;-webkit-text-stroke:0.30px #a9c1ff;">machine-learning</div>
<div class="t" style="left:627.54px;top:1136.33px;font-size:26.89px;line-height:26.89px;letter-spacing:0.695px;font-weight:400;color:#a9c1ff;-webkit-text-stroke:0.30px #a9c1ff;">production</div>
</body></html>
